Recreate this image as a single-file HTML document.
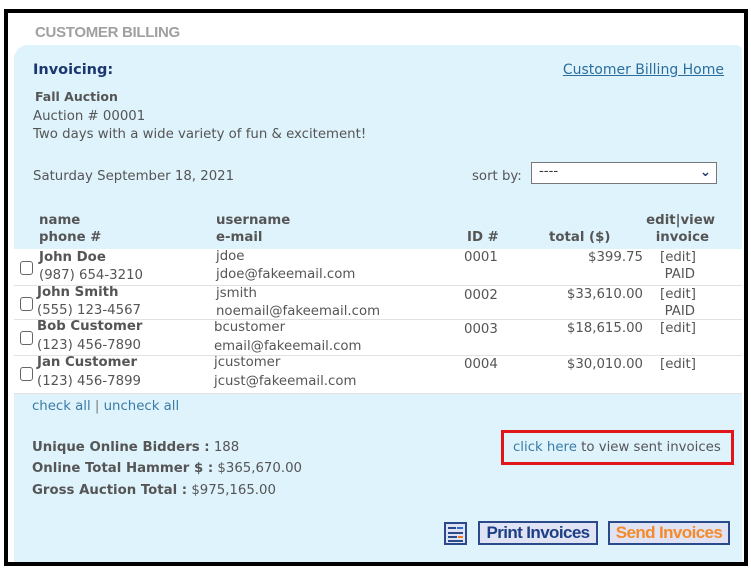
<!DOCTYPE html>
<html><head><meta charset="utf-8"><style>
*{margin:0;padding:0;box-sizing:border-box}
body{width:751px;height:573px;background:#fff;position:relative;overflow:hidden;font-family:"DejaVu Sans","Liberation Sans",sans-serif;color:#555}
.frame{position:absolute;left:4px;top:9px;width:744px;height:557px;border:4px solid #000;background:#fff}
.panel{position:absolute;left:14px;top:45px;width:728px;height:517px;background:#dff3fc;border-radius:14px 6px 0 0}
.t{position:absolute;white-space:nowrap;font-size:13.3px;line-height:14px}
.b{font-weight:bold;color:#555}
.row{position:absolute;left:14px;width:728px;background:#fff;border-bottom:1px solid #e2e2e2}
.cb{position:absolute;left:20px;width:13px;height:14px;border:1px solid #666;border-radius:3px;background:#fff}
.btn{position:absolute;top:521px;height:24px;border:2px solid #2b4a8a;background:#dfe3f3;font-family:"Liberation Sans",sans-serif;font-weight:bold;font-size:17px;line-height:20px;text-align:center;letter-spacing:-0.6px}
</style></head><body>
<div class="frame"></div>
<div class="panel"></div>
<div class="t" style="left:35px;top:26px;font-family:'Liberation Sans',sans-serif;font-size:15px;font-weight:bold;color:#a0a0a0;letter-spacing:-0.3px">CUSTOMER BILLING</div>
<div class="t" style="left:33px;top:62px;font-size:14.5px;font-weight:bold;color:#1c3770;line-height:16px">Invoicing:</div>
<div class="t" style="right:27px;top:62px;font-size:14px;color:#2b6e9e;text-decoration:underline;line-height:16px">Customer Billing Home</div>
<div class="t b" style="left:35px;top:90px;font-size:12.5px">Fall Auction</div>
<div class="t" style="left:33px;top:110px">Auction # 00001</div>
<div class="t" style="left:33px;top:128px">Two days with a wide variety of fun &amp; excitement!</div>
<div class="t" style="left:33px;top:170px">Saturday September 18, 2021</div>
<div class="t" style="left:472px;top:170px">sort by:</div>
<div style="position:absolute;left:531px;top:162px;width:186px;height:22px;border:1px solid #777;background:#fff"><span class="t" style="left:7px;top:2px;color:#333">----</span><span class="t" style="right:5px;top:3px;color:#1c3770;font-weight:bold">&#8964;</span></div>
<div class="t b" style="left:39px;top:214px">name</div>
<div class="t b" style="left:39px;top:231px">phone #</div>
<div class="t b" style="left:216px;top:214px">username</div>
<div class="t b" style="left:216px;top:231px">e-mail</div>
<div class="t b" style="left:467px;top:231px">ID #</div>
<div class="t b" style="left:549px;top:231px">total ($)</div>
<div class="t b" style="right:36px;top:214px">edit|view</div>
<div class="t b" style="right:42px;top:231px">invoice</div>

<div class="row" style="top:249px;height:37px"></div>
<div class="row" style="top:286px;height:34px"></div>
<div class="row" style="top:320px;height:36px"></div>
<div class="row" style="top:356px;height:38px"></div>

<div class="cb" style="top:261px"></div>
<div class="t b" style="left:39px;top:251px">John Doe</div><div class="t" style="left:39px;top:269px">(987) 654-3210</div>
<div class="t" style="left:216px;top:250px">jdoe</div><div class="t" style="left:216px;top:268px">jdoe@fakeemail.com</div>
<div class="t" style="left:464px;top:251px">0001</div><div class="t" style="right:108px;top:251px">$399.75</div>
<div class="t" style="left:660px;top:251px">[edit]</div><div class="t" style="right:56px;top:268px">PAID</div>

<div class="cb" style="top:297px"></div>
<div class="t b" style="left:37px;top:286px">John Smith</div><div class="t" style="left:37px;top:304px">(555) 123-4567</div>
<div class="t" style="left:216px;top:287px">jsmith</div><div class="t" style="left:216px;top:305px">noemail@fakeemail.com</div>
<div class="t" style="left:464px;top:289px">0002</div><div class="t" style="right:108px;top:288px">$33,610.00</div>
<div class="t" style="left:660px;top:288px">[edit]</div><div class="t" style="right:56px;top:305px">PAID</div>

<div class="cb" style="top:331px"></div>
<div class="t b" style="left:37px;top:320px">Bob Customer</div><div class="t" style="left:37px;top:339px">(123) 456-7890</div>
<div class="t" style="left:214px;top:321px">bcustomer</div><div class="t" style="left:214px;top:340px">email@fakeemail.com</div>
<div class="t" style="left:464px;top:323px">0003</div><div class="t" style="right:108px;top:322px">$18,615.00</div>
<div class="t" style="left:660px;top:322px">[edit]</div>

<div class="cb" style="top:367px"></div>
<div class="t b" style="left:37px;top:356px">Jan Customer</div><div class="t" style="left:37px;top:375px">(123) 456-7899</div>
<div class="t" style="left:214px;top:356px">jcustomer</div><div class="t" style="left:214px;top:375px">jcust@fakeemail.com</div>
<div class="t" style="left:464px;top:358px">0004</div><div class="t" style="right:108px;top:358px">$30,010.00</div>
<div class="t" style="left:660px;top:358px">[edit]</div>

<div class="t" style="left:32px;top:400px;color:#3b7ba3">check all <span style="color:#777">|</span> uncheck all</div>

<div style="position:absolute;left:501px;top:430px;width:233px;height:35px;border:3px solid #e0161b"></div>
<div class="t" style="left:513px;top:441px"><span style="color:#3b7ba3">click here</span> to view sent invoices</div>

<div class="t" style="left:32px;top:441px"><b>Unique Online Bidders :</b> 188</div>
<div class="t" style="left:32px;top:462px"><b>Online Total Hammer $ :</b> $365,670.00</div>
<div class="t" style="left:32px;top:484px"><b>Gross Auction Total :</b> $975,165.00</div>

<div style="position:absolute;left:444px;top:522px;width:23px;height:23px;border:2px solid #2b4a8a;background:#dfe3f3">
<div style="position:absolute;left:2px;top:3px;width:8px;height:2px;background:#2b4a8a"></div>
<div style="position:absolute;left:11px;top:3px;width:6px;height:2px;background:#2b6ad0"></div>
<div style="position:absolute;left:2px;top:8px;width:15px;height:2px;background:#2b4a8a"></div>
<div style="position:absolute;left:2px;top:12px;width:9px;height:2px;background:#2b4a8a"></div>
<div style="position:absolute;left:12px;top:12px;width:5px;height:2px;background:#f07a20"></div>
<div style="position:absolute;left:2px;top:16px;width:15px;height:2px;background:#2b4a8a"></div>
</div>
<div class="btn" style="left:478px;width:120px;color:#1c3f86">Print Invoices</div>
<div class="btn" style="left:608px;width:122px;color:#f58a2a">Send Invoices</div>
</body></html>
